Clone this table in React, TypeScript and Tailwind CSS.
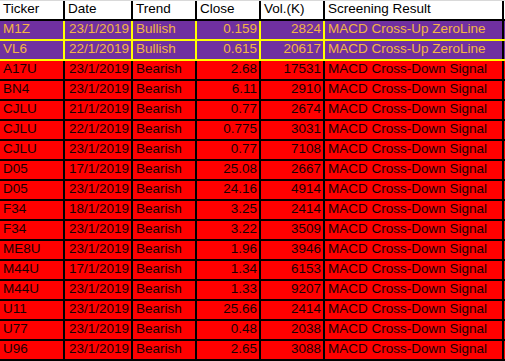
import React from 'react';

type Row = {
  ticker: string;
  date: string;
  trend: string;
  close: string;
  vol: string;
  result: string;
};

const rows: Row[] = [
  { ticker: 'M1Z', date: '23/1/2019', trend: 'Bullish', close: '0.159', vol: '2824', result: 'MACD Cross-Up ZeroLine' },
  { ticker: 'VL6', date: '22/1/2019', trend: 'Bullish', close: '0.615', vol: '20617', result: 'MACD Cross-Up ZeroLine' },
  { ticker: 'A17U', date: '23/1/2019', trend: 'Bearish', close: '2.68', vol: '17531', result: 'MACD Cross-Down Signal' },
  { ticker: 'BN4', date: '23/1/2019', trend: 'Bearish', close: '6.11', vol: '2910', result: 'MACD Cross-Down Signal' },
  { ticker: 'CJLU', date: '21/1/2019', trend: 'Bearish', close: '0.77', vol: '2674', result: 'MACD Cross-Down Signal' },
  { ticker: 'CJLU', date: '22/1/2019', trend: 'Bearish', close: '0.775', vol: '3031', result: 'MACD Cross-Down Signal' },
  { ticker: 'CJLU', date: '23/1/2019', trend: 'Bearish', close: '0.77', vol: '7108', result: 'MACD Cross-Down Signal' },
  { ticker: 'D05', date: '17/1/2019', trend: 'Bearish', close: '25.08', vol: '2667', result: 'MACD Cross-Down Signal' },
  { ticker: 'D05', date: '23/1/2019', trend: 'Bearish', close: '24.16', vol: '4914', result: 'MACD Cross-Down Signal' },
  { ticker: 'F34', date: '18/1/2019', trend: 'Bearish', close: '3.25', vol: '2414', result: 'MACD Cross-Down Signal' },
  { ticker: 'F34', date: '23/1/2019', trend: 'Bearish', close: '3.22', vol: '3509', result: 'MACD Cross-Down Signal' },
  { ticker: 'ME8U', date: '23/1/2019', trend: 'Bearish', close: '1.96', vol: '3946', result: 'MACD Cross-Down Signal' },
  { ticker: 'M44U', date: '17/1/2019', trend: 'Bearish', close: '1.34', vol: '6153', result: 'MACD Cross-Down Signal' },
  { ticker: 'M44U', date: '23/1/2019', trend: 'Bearish', close: '1.33', vol: '9207', result: 'MACD Cross-Down Signal' },
  { ticker: 'U11', date: '23/1/2019', trend: 'Bearish', close: '25.66', vol: '2414', result: 'MACD Cross-Down Signal' },
  { ticker: 'U77', date: '23/1/2019', trend: 'Bearish', close: '0.48', vol: '2038', result: 'MACD Cross-Down Signal' },
  { ticker: 'U96', date: '23/1/2019', trend: 'Bearish', close: '2.65', vol: '3088', result: 'MACD Cross-Down Signal' },
];

const cols = 'grid grid-cols-[65px_68px_64px_64px_64px_179px]';

export default function App() {
  return (
    <div
      className="w-[505px] h-[361px] bg-white border-t border-[#d9d9d9] text-[13.5px] leading-none overflow-hidden"
      style={{ fontFamily: '"Liberation Sans", Arial, sans-serif' }}
    >
      {/* header */}
      <div className={`${cols} h-[20px] border-b-2 border-black text-black`}>
        <div className="border-r-2 border-black flex items-end pl-[3px] pb-[4px]">Ticker</div>
        <div className="border-r-2 border-black flex items-end pl-[3px] pb-[4px]">Date</div>
        <div className="border-r-2 border-black flex items-end pl-[3px] pb-[4px]">Trend</div>
        <div className="border-r-2 border-black flex items-end pl-[3px] pb-[4px]">Close</div>
        <div className="border-r-2 border-black flex items-end pl-[3px] pb-[4px]">Vol.(K)</div>
        <div className="border-r-2 border-black flex items-end pl-[3px] pb-[4px]">Screening Result</div>
      </div>

      {rows.map((r, i) => {
        const bull = r.trend === 'Bullish';
        const rowCls = bull
          ? 'bg-[#7030a0] text-[#f2b544] border-[#ffff00]'
          : 'bg-[#ff0000] text-[#1a0000] border-black';
        const line = bull ? 'border-[#ffff00]' : 'border-black';
        return (
          <div key={i} className={`${cols} h-[20px] border-b-2 ${rowCls}`}>
            <div className={`border-r-2 ${line} flex items-end pl-[3px] pb-[4px]`}>{r.ticker}</div>
            <div className={`border-r-2 ${line} flex items-end justify-end pr-[2px] pb-[4px]`}>{r.date}</div>
            <div className={`border-r-2 ${line} flex items-end pl-[3px] pb-[4px]`}>{r.trend}</div>
            <div className={`border-r-2 ${line} flex items-end justify-end pr-[2px] pb-[4px]`}>{r.close}</div>
            <div className={`border-r-2 ${line} flex items-end justify-end pr-[2px] pb-[4px]`}>{r.vol}</div>
            <div className="border-r-2 border-black flex items-end pl-[3px] pb-[4px] whitespace-nowrap">{r.result}</div>
          </div>
        );
      })}
    </div>
  );
}
